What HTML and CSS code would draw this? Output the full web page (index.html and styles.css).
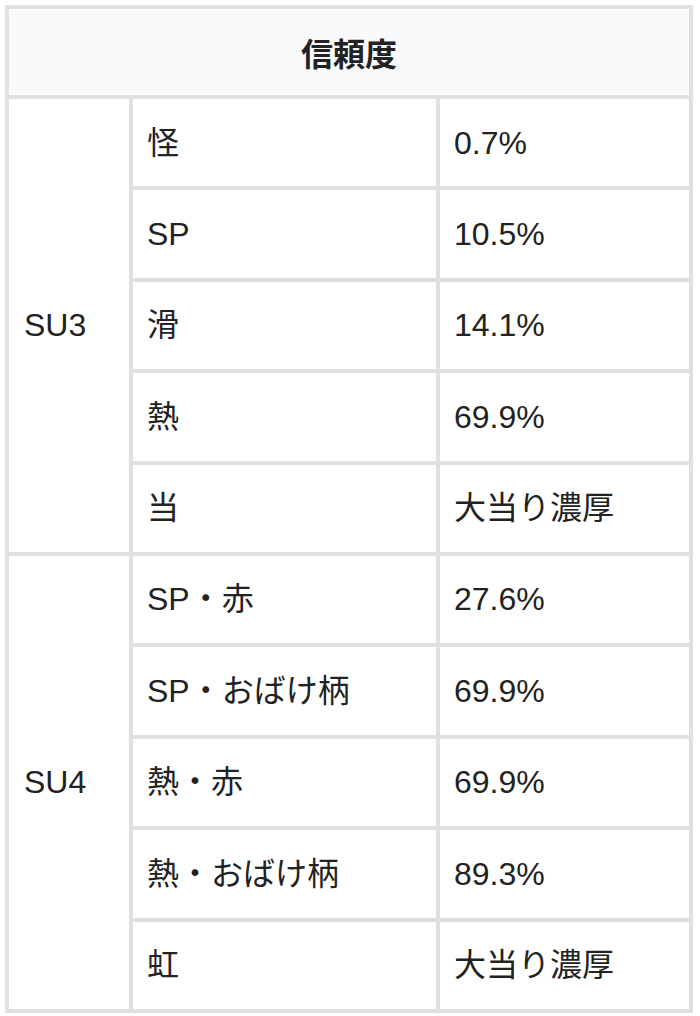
FILE: index.html
```html
<!DOCTYPE html>
<html lang="ja">
<head>
<meta charset="utf-8">
<title>信頼度</title>
<link rel="stylesheet" href="styles.css">
</head>
<body>
<table class="rate-table">
  <colgroup>
    <col class="col-group">
    <col class="col-name">
    <col class="col-value">
  </colgroup>
  <thead>
    <tr><th colspan="3" class="head">信頼度</th></tr>
  </thead>
  <tbody>
    <tr><td rowspan="5" class="group">SU3</td><td>怪</td><td>0.7%</td></tr>
    <tr><td>SP</td><td>10.5%</td></tr>
    <tr><td>滑</td><td>14.1%</td></tr>
    <tr><td>熱</td><td>69.9%</td></tr>
    <tr><td>当</td><td>大当り濃厚</td></tr>
    <tr><td rowspan="5" class="group">SU4</td><td>SP・赤</td><td>27.6%</td></tr>
    <tr><td>SP・おばけ柄</td><td>69.9%</td></tr>
    <tr><td>熱・赤</td><td>69.9%</td></tr>
    <tr><td>熱・おばけ柄</td><td>89.3%</td></tr>
    <tr><td>虹</td><td>大当り濃厚</td></tr>
  </tbody>
</table>
</body>
</html>
```

FILE: styles.css
```css
html, body {
  background: #ffffff;
}
body {
  margin: 5px 7px 0 5px;
  font-family: "Liberation Sans", Arial, "Noto Sans CJK JP", sans-serif;
  color: #222222;
}
.rate-table {
  width: 688px;
  table-layout: fixed;
  border-collapse: separate;
  border-spacing: 0;
  border: 2px solid #e0e0e0;
}
.col-group { width: 124px; }
.col-name { width: 307px; }
.col-value { width: 253px; }
.rate-table th,
.rate-table td {
  box-sizing: border-box;
  border: 2px solid #e0e0e0;
  padding: 0 14px;
  font-size: 32px;
  line-height: 1.2;
  text-align: left;
  vertical-align: middle;
  font-weight: normal;
}
.rate-table tbody tr {
  height: 91.4px;
}
.rate-table .head {
  height: 90px;
  background: #f8f9fa;
  text-align: center;
  font-weight: bold;
  font-family: "Noto Sans CJK JP", sans-serif;
}
.rate-table .group {
  padding-left: 15px;
}
```
